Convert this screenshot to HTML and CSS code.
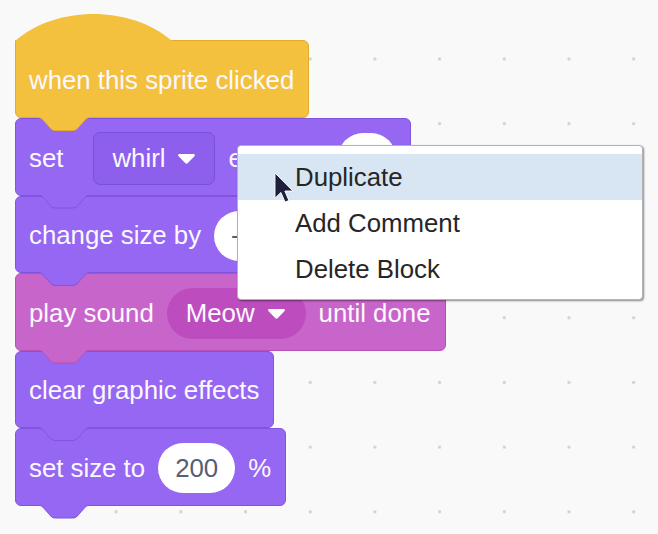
FILE: index.html
```html
<!DOCTYPE html>
<html>
<head>
<meta charset="utf-8">
<link rel="stylesheet" href="styles.css">
</head>
<body>
<div class="workspace">
  <div class="stack">
    <div class="hat">
      <div class="hat-cap"></div>
      <div class="block block--event hat-body"><span class="label">when this sprite clicked</span></div>
    </div>
    <div class="block block--looks">
      <span class="label label--set">set</span>
      <span class="dropdown dropdown--looks"><span>whirl</span>
        <svg class="caret" width="17" height="10" viewBox="0 0 17 10"><path d="M1.5 0H15.5C16.8 0 17.3 1.3 16.4 2.2L9.6 9.2C9 9.8 8 9.8 7.4 9.2L0.6 2.2C-0.3 1.3 0.2 0 1.5 0Z" fill="#fff"/></svg>
      </span>
      <span class="label">effect to</span>
      <span class="number number--small">0</span>
    </div>
    <div class="block block--looks">
      <span class="label">change size by</span>
      <span class="number">-10</span>
    </div>
    <div class="block block--sound">
      <span class="label">play sound</span>
      <span class="dropdown dropdown--sound"><span>Meow</span>
        <svg class="caret" width="17" height="10" viewBox="0 0 17 10"><path d="M1.5 0H15.5C16.8 0 17.3 1.3 16.4 2.2L9.6 9.2C9 9.8 8 9.8 7.4 9.2L0.6 2.2C-0.3 1.3 0.2 0 1.5 0Z" fill="#fff"/></svg>
      </span>
      <span class="label">until done</span>
    </div>
    <div class="block block--looks">
      <span class="label">clear graphic effects</span>
    </div>
    <div class="block block--looks">
      <span class="label">set size to</span>
      <span class="number">200</span>
      <span class="label">%</span>
    </div>
  </div>

  <div class="menu">
    <div class="menu-item menu-item--active">Duplicate</div>
    <div class="menu-item">Add Comment</div>
    <div class="menu-item">Delete Block</div>
  </div>

  <svg class="cursor" width="20" height="32" viewBox="0 0 12.5 20">
    <path d="M0.6 0.6V16.4L4.3 12.8L6.9 18.8L9.3 17.8L6.8 11.9H11.8Z" fill="#1d1f3d" stroke="#ffffff" stroke-width="0.6" stroke-linejoin="round"/>
  </svg>
</div>
</body>
</html>
```

FILE: styles.css
```css
html, body {
  margin: 0;
  padding: 0;
}

body {
  width: 658px;
  height: 534px;
  overflow: hidden;
  background-color: #f9f9f9;
  background-image: radial-gradient(circle at center, #cfcfcf 0, #cfcfcf 1.1px, rgba(249,249,249,0) 1.9px);
  background-size: 64.7px 64.7px;
  background-position: 19.15px 26.65px;
  font-family: "Liberation Sans", Arial, Helvetica, sans-serif;
}

.workspace {
  position: relative;
  height: 534px;
  box-sizing: border-box;
  padding: 12px 0 0 15px;
}

.stack {
  display: flex;
  flex-direction: column;
  align-items: flex-start;
}

.hat {
  display: flex;
  flex-direction: column;
  align-items: flex-start;
}

.hat-cap {
  width: 157px;
  height: 29px;
  margin-bottom: -1px;
  background: #f4c13f;
  clip-path: path('M0 29 C 41 -7, 116 -7, 157 29 Z');
  position: relative;
  z-index: 1;
}

.block {
  --fill: #9567f2;
  --edge: #8054de;
  position: relative;
  box-sizing: border-box;
  height: 77.5px;
  display: flex;
  align-items: center;
  gap: 13px;
  padding: 3px 14px 0 13px;
  background: var(--fill);
  border: 1px solid var(--edge);
  border-radius: 6px;
  color: #fbf8ff;
  font-size: 25.8px;
  white-space: nowrap;
}

.block::before,
.block::after {
  content: "";
  position: absolute;
  left: 22px;
  width: 52px;
  height: 13px;
  clip-path: path('M0 0c2.9 0 4.3 1.6 5.8 3.3l5.8 6.5c1.4 1.6 2.9 3.3 5.8 3.3h17.3c2.9 0 4.3 -1.6 5.8 -3.3l5.8 -6.5c1.4 -1.6 2.9 -3.3 5.8 -3.3Z');
  z-index: 2;
}

.block::before {
  bottom: -14px;
  background: var(--edge);
}

.block::after {
  bottom: -13px;
  background: var(--fill);
}

.block--event {
  --fill: #f4c13f;
  --edge: #e2ab2b;
}

.hat-body {
  height: 78px;
  width: 294px;
  border-top-left-radius: 0;
  padding-right: 14px;
}

.block--looks {
  --fill: #9567f2;
  --edge: #8054de;
}

.block--sound {
  --fill: #c865ca;
  --edge: #b650b8;
}

.label--set {
  margin-right: 17px;
}

.dropdown {
  display: flex;
  align-items: center;
  gap: 13px;
  box-sizing: border-box;
  color: #fbf8ff;
}

.dropdown--looks {
  height: 53px;
  padding: 0 19px 0 18px;
  background: #8e5fed;
  border: 1px solid #7b50d8;
  border-radius: 7px;
}

.dropdown--sound {
  height: 51px;
  padding: 0 21px 0 19px;
  background: #bd4dbe;
  border-radius: 26px;
}

.caret {
  display: block;
  margin-top: 1px;
}

.number {
  box-sizing: border-box;
  height: 50px;
  padding: 0 17px;
  display: flex;
  align-items: center;
  justify-content: center;
  background: #ffffff;
  border-radius: 25px;
  color: #575e75;
}

.number--small {
  min-width: 58px;
  margin-left: 5px;
}

.menu {
  position: absolute;
  left: 237px;
  top: 145px;
  width: 406px;
  height: 155px;
  box-sizing: border-box;
  padding-top: 8px;
  background: #ffffff;
  border: 1px solid #b3b3b3;
  border-radius: 4px;
  box-shadow: 1px 1px 2px rgba(0, 0, 0, 0.45);
  z-index: 5;
}

.menu-item {
  height: 46px;
  display: flex;
  align-items: center;
  padding-left: 57px;
  font-size: 25.8px;
  color: #262626;
}

.menu-item--active {
  background: #d8e5f3;
}

.cursor {
  position: absolute;
  left: 274px;
  top: 172px;
  z-index: 6;
}
```
